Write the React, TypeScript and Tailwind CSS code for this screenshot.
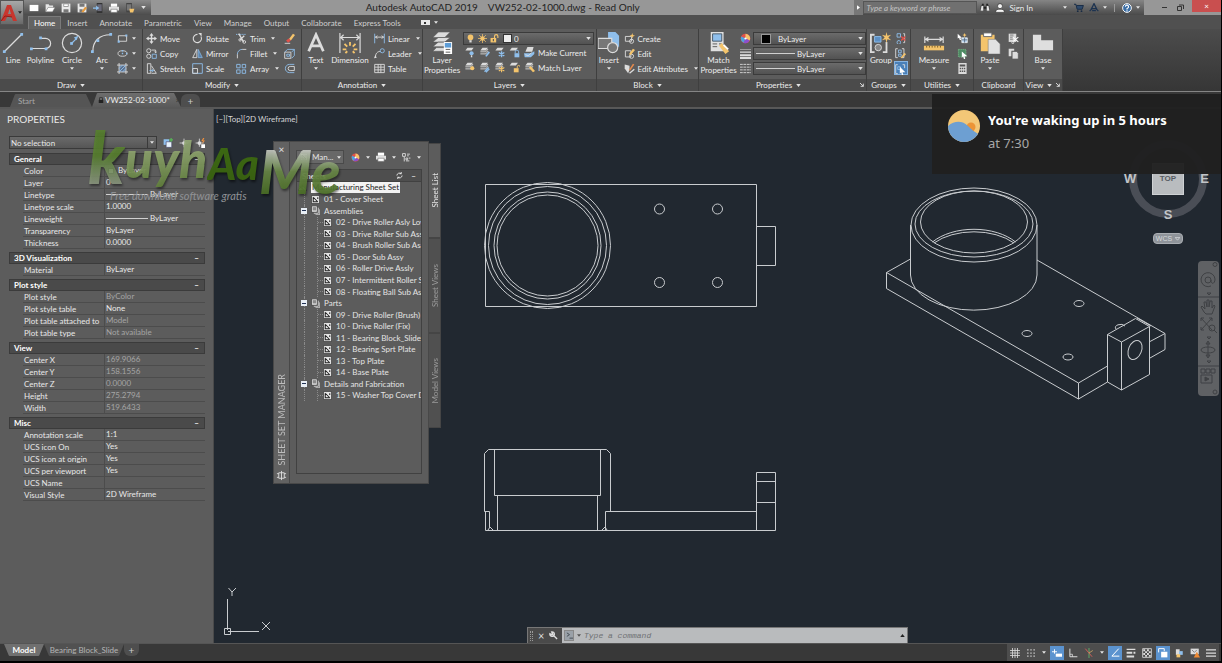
import type { ReactNode } from 'react'

const W = '#dcdcdc'
const B = '#8fbfec'
const Y = '#f4c46c'

const line = { fill: 'none', stroke: W, strokeWidth: 1.3 }
const blue = { fill: 'none', stroke: B, strokeWidth: 1.3 }

// stack of sheets shared by every layer icon
const sheets = (
  <>
    <path d="M5 1h8l-3 4H2z" fill={W} />
    <path d="M2 7h8l3-4M2 10h8l3-4" {...line} />
  </>
)

// drawn on a 16 x 16 grid
const small: Record<string, ReactNode> = {
  rect: <><path d="M2 4h12v8H2z" {...line} /><path d="M1 11h3v3H1zM12 2h3v3h-3z" fill={B} /></>,
  ellipse: <><ellipse cx="8" cy="8" rx="6.5" ry="4" {...line} /><path d="M7 7h2v2H7zM7 3h2v2H7zM13 7h2v2h-2z" fill={B} /></>,
  hatch: <><path d="M3 3h10v10H3z" fill="#5d7391" /><path d="M3 0v16M13 0v16M0 3h16M0 13h16" {...line} /><path d="M3 8l5-5M3 13L13 3M8 13l5-5" {...blue} /></>,
  move: <><path d="M8 2v12M2 8h12" {...line} strokeWidth={2} /><path d="M8 0l3 4H5zM8 16l3-4H5zM0 8l4-3v6zM16 8l-4-3v6z" fill={W} /></>,
  copy: <><circle cx="4" cy="4" r="3" {...line} /><circle cx="4" cy="12" r="3" {...line} /><path d="M9 9h6v6H9z" {...blue} /><path d="M8 3h6v4M12 5l2 2 2-2" {...line} /></>,
  stretch: <><path d="M2 1h5v14H2z" {...line} /><path d="M8 4l7 11H8" {...line} /><path d="M5 11h6M9 9l2 2-2 2" {...blue} /></>,
  rotate: <><path d="M13 5a6 6 0 1 1-5-3" {...line} strokeWidth={1.6} /><path d="M9 0h5v5z" fill={W} /></>,
  mirror: <><path d="M7 2v12H1z" {...line} /><path d="M9 2v12h6z" fill="#5a83ad" stroke={B} /></>,
  scale: <><path d="M1 1h14v14H1z" {...blue} /><path d="M1 8h7v7H1z" {...line} /></>,
  trim: <><path d="M0 2h15" {...blue} strokeDasharray="2 1" /><path d="M4 1l7 12M12 4L6 10" {...line} strokeWidth={2} /><circle cx="12" cy="13" r="2" {...line} /><circle cx="6" cy="10" r="1.8" {...line} /></>,
  fillet: <><path d="M2 15V9" {...line} /><path d="M2 9a7 7 0 0 1 7-7" {...blue} /><path d="M9 2h6" {...line} /></>,
  array: <path d="M1 2h5v5H1zM9 2h5v5H9zM1 10h5v5H1zM9 10h5v5H9z" {...blue} />,
  eraser: <><path d="M7 9l6-8 3 2-6 8z" fill={Y} /><path d="M3 11l4-3 3 3-4 3z" fill="#e0504a" /><path d="M1 15h8" {...line} /></>,
  explode: <><path d="M1 6h9v9H1z" {...line} /><path d="M1 6l4-4h10l-4 4M15 2v9l-4 4" {...blue} /><path d="M4 9h4v3H4z" {...blue} /></>,
  offset: <><path d="M15 2H8a6 6 0 0 0 0 12h7" {...blue} /><path d="M15 5H9a3 3 0 0 0 0 6h6z" {...line} /></>,
  linear: <><path d="M1 1v14M15 1v14" {...blue} /><path d="M2 6h12M5 4L2 6l3 2M11 4l3 2-3 2" {...line} /></>,
  leader: <><path d="M2 14c0-6 3-9 7-9" {...line} /><path d="M0 15l2-5 2 4z" fill={W} /><circle cx="12" cy="4" r="3" {...blue} /></>,
  table: <><path d="M1 2h14v12H1zM1 6h14M1 10h14M6 2v12M10 2v12" {...line} /></>,
  layoff: <><path d="M5 1h9l-3 4H2z" fill={W} /><circle cx="11" cy="9" r="3" fill={B} /><path d="M10 12h2v3h-2z" fill={W} /></>,
  layiso: <>{sheets}<path d="M9 13l5-7 2 2-5 6z" fill={B} /></>,
  layfreeze: <><path d="M5 1h9l-3 4H2z" fill={W} /><path d="M11 6v9M7 8l8 5M15 8l-8 5" {...blue} strokeWidth={2} /></>,
  laylock: <><path d="M4 1h9l-3 4H1z" fill={W} /><path d="M8 9h7v6H8z" fill={B} /><path d="M9 9V7a2 2 0 0 1 5 0v2" {...blue} /></>,
  laycur: <><path d="M5 0h9l-2 7H2z" fill={W} /><path d="M0 9h10l5-3v4l-5 5H1z" fill={B} /><path d="M2 11l4 2 5-5" {...line} /></>,
  layon: <>{sheets}<circle cx="12" cy="9" r="3" fill={Y} /></>,
  layuniso: <>{sheets}<path d="M8 14l6-6M10 15l5-5" {...blue} strokeWidth={2} /></>,
  laythaw: <>{sheets}<path d="M11 6v9M7 8l8 5M15 8l-8 5" {...line} stroke={Y} strokeWidth={1.6} /></>,
  layunlock: <><path d="M4 1h9l-3 4H1z" fill={W} /><path d="M7 9h7v6H7z" fill={Y} /><path d="M12 9V7a2 2 0 0 1 4 0" {...line} stroke={Y} /></>,
  laymatch: <>{sheets}<path d="M7 8l3-2 6 7-3 2z" fill={Y} /></>,
  create: <><path d="M2 5h9v7H2z" {...line} /><circle cx="11" cy="12" r="3" {...line} /><path d="M12 0l1 3 3 1-3 1-1 3-1-3-3-1 3-1z" fill={Y} /></>,
  edit: <><path d="M2 4h8v9H2z" {...line} /><circle cx="11" cy="12" r="3" {...line} /><path d="M7 9l6-8 3 2-6 7z" fill={Y} /></>,
  attr: <><path d="M1 2l7 2v6l-2 5-5-7z" fill={W} /><path d="M7 10l6-9 2 1-6 9z" fill="#e58a4c" /><path d="M8 15l7-6" {...line} strokeWidth={2} /></>,
  wheel: <><circle cx="8" cy="8" r="7" fill="#e0504a" /><path d="M8 8V1a7 7 0 0 1 6 10z" fill={Y} /><path d="M8 8l6 3a7 7 0 0 1-9 3z" fill="#8a4fd0" /><path d="M8 8L5 14A7 7 0 0 1 2 5z" fill="#4da3e0" /><circle cx="8" cy="8" r="1.6" fill="#fff" /></>,
  weight: <path d="M0 2h16v1H0zM0 5h16v2H0zM0 9h16v3H0zM0 13h16v3H0z" fill={W} />,
  ltype: <path d="M0 2h16M0 6h16M0 10h16M0 14h16" {...line} strokeDasharray="4 1" />,
  ungroup: <><path d="M3 1h5v5H3zM3 14a2.500 2.500 0 1 0 5 0 2.500 2.500 0 1 0-5-1z" {...blue} /><path d="M12 1h2v13h-2" {...line} /><path d="M9 5l6 6M15 5l-6 6" stroke="#e0504a" strokeWidth="2" /></>,
  groupedit: <><path d="M4 1H1v13h3M10 1h3v13h-3" {...line} /><path d="M5 3h4v4H5zM5 9h4v3H5z" {...blue} /><path d="M8 14l6-7 2 2-6 6z" fill={Y} /></>,
  groupsel: <><path d="M4 1H1v13h3M11 1h3v5" {...line} /><path d="M4 4h4v4H4z" {...blue} /><path d="M7 4l8 8h-4l1 4-2 0-1-4-2 2z" fill="#fff" /></>,
  quick: <><path d="M1 1l6 6H5l1 3-2 0-1-3-2 1z" fill="#fff" /><path d="M7 7h8v7H7z" fill="#b9d6f2" stroke="#fff" /><path d="M7 10h8M11 7v7" stroke="#456" /><path d="M11 0l1 2 2 1-2 1-1 2-1-2-2-1 2-1z" fill={Y} /></>,
  select: <><path d="M2 2h11v11H2z" fill="#4d8a63" stroke="#7ec48f" strokeDasharray="2 1" /><path d="M7 5l8 7h-4l1 4h-2l-1-4-2 2z" fill="#fff" /></>,
  calc: <><path d="M2 0h12v16H2z" fill={W} /><path d="M4 2h8v3H4zM4 7h2v2H4zM7 7h2v2H7zM10 7h2v2h-2zM4 11h2v2H4zM7 11h2v2H7zM10 11h2v2h-2z" fill="#555" /></>,
  cut: <><path d="M1 1h11v12H1z" fill={W} /><path d="M3 3h5M3 6h5M3 9h4" stroke="#555" /><path d="M7 6l8 7M15 6l-8 7" stroke="#fff" strokeWidth="1.500" /><circle cx="7" cy="14" r="1.500" {...line} /></>,
  clip: <><path d="M1 1h8v3H5v8H1z" fill={W} /><path d="M6 5h7l2 3v8H6z" fill={W} stroke="#555" /></>,
  bulb: <><circle cx="8" cy="6" r="5" fill={Y} /><path d="M6 11h4v4H6z" fill={W} /></>,
  sun: <><circle cx="8" cy="8" r="4" fill={Y} /><path d="M8 0v16M0 8h16M2 2l12 12M14 2L2 14" stroke={Y} strokeWidth="1.300" /></>,
  unlock: <><path d="M1 7h10v8H1z" fill={Y} /><path d="M8 7V4a3 3 0 0 1 6 0v3" fill="none" stroke={Y} strokeWidth="2" /><path d="M5 9h2v4H5z" fill="#555" /></>,
  new: <path d="M1 3h14v10H1z" fill="#fff" />,
  open: <><path d="M1 14V2h5l1 2h6v3H5z" fill="#e8e8e8" /><path d="M5 7h11l-4 7H1z" fill="#fff" stroke="#777" strokeWidth=".7" /></>,
  save: <><path d="M1 1h14v14H1z" fill="#e9e9e9" /><path d="M4 1h8v5H4zM4 10h8v5H4z" fill="#777" /><path d="M5 2h6v3H5z" fill="#fff" /></>,
  saveas: <><path d="M1 1h14v14H1z" fill="#e9e9e9" /><path d="M4 1h8v5H4zM4 10h5v5H4z" fill="#777" /><path d="M7 14l6-8 3 2-6 7z" fill="#e59a3c" /></>,
  mobile: <><path d="M6 0h9v16H6z" fill="#333" /><path d="M7 2h7v11H7z" fill="#6a6a78" /><path d="M0 7h5V4l5 4-5 4V9H0z" fill={B} /></>,
  print: <><path d="M3 1h10v5H3z" fill="#fff" /><path d="M0 6h16v6H0z" fill="#e0e0e0" /><path d="M3 10h10v5H3z" fill="#fff" stroke="#777" /></>,
  publish: <><path d="M2 0h9v15H2z" fill="#444" /><path d="M3 2h7v10H3z" fill="#777" /><path d="M7 9h8l-2 6H8z" fill={Y} /></>,
  sheet: <><path d="M1 1h14v14H1z" fill="#e9e9e9" stroke="#222" /><path d="M4 4l8 8M4 4v8h8M12 4v3" stroke="#222" strokeWidth="1.800" fill="none" /></>,
  subset: <><path d="M1 0h10v11H1z" fill="#e9e9e9" stroke="#222" /><path d="M3 2h6v6H3z" fill="#8a8a8a" /><path d="M13 3v10H5M15.500 6v9.500H8" stroke={W} fill="none" strokeWidth="1.400" /></>,
  set: <><path d="M0 13l8-8 8 8z" fill={W} stroke="#222" /><path d="M2 5l8 7M8 3v5" stroke="#222" strokeWidth="1.500" /></>,
  tree: <><path d="M1 1h5v5H1zM9 2h5M9 5h3M4 7v8M7 9h3v3H7zM12 9h3M7 14h6" {...line} strokeWidth={1.6} /></>,
  binoculars: <><path d="M2 4h4v9H0zM10 4h4l2 9h-6z" fill="#e4e4e4" stroke="#222" /><path d="M6 6h4v3H6zM3 1h3v3H3zM10 1h3v3h-3z" fill="#222" /></>,
  user: <><circle cx="8" cy="5" r="4" fill="#f4f4f4" stroke="#222" /><path d="M1 15c0-5 4-5 7-5s7 0 7 5z" fill="#f4f4f4" stroke="#222" /></>,
  cart: <><path d="M0 2h3l2 8h8l2-6H4" fill="#2f4a6b" stroke="#182b44" strokeWidth="1.500" /><circle cx="6" cy="13" r="1.500" fill="#182b44" /><circle cx="12" cy="13" r="1.500" fill="#182b44" /></>,
  a360: <><path d="M8 1l4 8H4z" fill="none" stroke="#1d3350" strokeWidth="2" /><path d="M1 13l4-4M15 13l-4-4M5 12h6" stroke="#1d3350" strokeWidth="2" /></>,
  help: <><circle cx="8" cy="8" r="7" fill="#3b6ea5" stroke="#fff" strokeWidth="1.500" /><path d="M5.500 6a2.500 2.500 0 1 1 3.500 2.200L8 9v1.500M8 11.500v2" stroke="#fff" strokeWidth="1.800" fill="none" /></>,
  grid: <path d="M4 0v16M8 0v16M12 0v16M0 4h16M0 8h16M0 12h16" {...line} />,
  snap: <path d="M3 2v13M8 2v13M13 2v13" {...line} strokeWidth={2} strokeDasharray="2 3" />,
  dyn: <><path d="M4 2v7M0 6h8" stroke="#fff" strokeWidth="1.500" /><path d="M6 9h10v5H6z" fill="#fff" /></>,
  ortho: <><path d="M3 1v13h12" {...line} strokeWidth={1.6} /><path d="M3 10h4v4" {...line} /></>,
  polar: <><path d="M8 0v16" stroke="#5fae6a" strokeWidth="1.500" /><path d="M2 1l11 13" stroke="#d2605a" strokeWidth="1.500" /><path d="M8 8l6-4" stroke={Y} /></>,
  track: <path d="M14 1L3 13h12" fill="none" stroke="#fff" strokeWidth="1.600" />,
  lwt: <path d="M1 1h14v2H1zM1 6h9v3H1zM1 12h12v3H1zM12 6h3v3h-3z" fill={W} />,
  transp: <><path d="M1 1h14v14H1z" {...line} /><path d="M2 2h3v3H2zM8 2h3v3H8zM5 5h3v3H5zM11 5h3v3h-3zM2 8h3v3H2zM8 8h3v3H8zM5 11h3v3H5zM11 11h3v3h-3z" fill={W} /></>,
  cycle: <><path d="M5 6h10v9H5z" fill="#fff" /><path d="M1 1h9v4M1 1v6" stroke="#fff" strokeWidth="1.500" fill="none" /></>,
  ucs: <><path d="M3 2h6v9H3z" fill={W} /><path d="M8 5h6v6H8z" fill={B} /><path d="M4 10h6v5H4z" fill={Y} /></>,
  warn: <><path d="M1 1h13v9H1z" fill={W} /><path d="M3 3l4 4 4-4" stroke="#555" fill="none" /><path d="M11 6l5 9H6z" fill="#ee8a35" /></>,
  menu: <path d="M0 3h16M0 8h16M0 13h16" {...line} strokeWidth={2} />,
  pick: <><path d="M1 2h9v9H1z" fill={B} /><path d="M5 6h9v9H5z" fill="#e8f2fb" stroke="#446" /><path d="M13 0v6M10 3h6" stroke="#57b457" strokeWidth="2" /></>,
  target: <><path d="M8 1v14M1 8h14" {...line} /><circle cx="8" cy="8" r="3" fill={W} /></>,
  quicksel: <><path d="M7 1v13M1 8h13" {...line} /><circle cx="7" cy="8" r="3" fill={W} /><path d="M13 0l-3 5h3l-2 5 5-6h-3l2-4z" fill="#f2913c" /><path d="M10 10h6v6h-6z" fill="#fff" /></>,
}

function Icon({ name, className = 'size-[11px]' }: { name: string; className?: string }) {
  return (
    <svg viewBox="0 0 16 16" className={`${className} shrink-0`} aria-hidden="true">
      {small[name]}
    </svg>
  )
}

function Caret({ className = 'w-1' }: { className?: string }) {
  return (
    <svg viewBox="0 0 6 4" className={`h-[3px] shrink-0 ${className}`} aria-hidden="true">
      <path d="M0 0h6L3 4z" fill="#e4e4e4" />
    </svg>
  )
}

// drawn on a 24 x 24 grid
const big: Record<string, ReactNode> = {
  Line: <><path d="M3 21L21 3" {...line} /><path d="M1 20h3v3H1zM20 1h3v3h-3z" fill={B} /></>,
  Polyline: <><path d="M2 18h15a5 5 0 0 0 0-11h-5" {...line} /><path d="M0 17h3v3H0zM10 5h3v3h-3zM16 17h3v3h-3z" fill={B} /></>,
  Circle: <><circle cx="12" cy="12" r="10.500" {...line} /><path d="M12 12l5-5" {...blue} /><path d="M10 11h3v3h-3z" fill={B} /><path d="M19 4l-5 2 3 3z" fill={B} /></>,
  Arc: <><path d="M2 21C2 10 9 3 21 3" {...line} /><path d="M0 20h3v3H0zM6 8h3v3H6zM20 1h3v3h-3z" fill={B} /></>,
  Text: <path d="M4 21L12 3l8 18M7 15h10" fill="none" stroke={W} strokeWidth="3" />,
  Dimension: <><path d="M1 1v22M23 1v22M2 6h20M5 3L2 6l3 3M19 3l3 3-3 3" {...line} /><path d="M12 11v4M6 13l3 3M18 13l-3 3M4 19h4M20 19h-4M9 21l-2 2M15 21l2 2" stroke={Y} strokeWidth="2" /></>,
  Layer: <><path d="M8 0h13l-6 6H2zM8 6h13l-6 5H2zM8 11h13l-6 5H2zM6 17h9v4H2z" fill={W} stroke="#555" strokeWidth=".6" /><path d="M14 11h9v13h-9z" fill="#fff" /><path d="M15 12h7v5h-7z" fill="#5c9cd6" /><path d="M16 19h5M16 22h5" stroke="#555" /></>,
  Insert: <><path d="M11 0h8l4 4v12H11z" fill={B} /><path d="M0 7h15v11H0z" fill="#777" stroke={W} strokeWidth="1.300" /><circle cx="16" cy="17" r="5.500" fill="#777" stroke={W} strokeWidth="1.300" /></>,
  Match: <><path d="M3 0h14v21H3z" fill="#e0e0e0" /><path d="M5 2h10v8H5z" fill={B} stroke="#456" /><path d="M5 13h5M5 16h5M12 13h3" stroke="#555" /><path d="M12 15l3-3 8 9-4 3z" fill={Y} /><path d="M17 14l5 5" stroke="#fff" strokeWidth="2" /></>,
  Group: <><path d="M5 3H1v19h4M14 22h4V11" fill="none" stroke={W} strokeWidth="2" /><path d="M5 5h7v6H5z" fill="#5c8fc4" stroke={B} /><circle cx="9" cy="17" r="3.500" fill="#888" stroke={W} /><path d="M18 0l1 4 4-1-3 3 3 3-4-1-1 4-1-4-4 1 3-3-3-3 4 1z" fill={Y} /></>,
  Measure: <><path d="M2 5v7M22 5v7M3 8h18M6 6L3 8l3 2M18 6l3 2-3 2" {...line} /><path d="M1 15h22v5H1z" fill={Y} /><path d="M4 15v2M7 15v2M10 15v2M13 15v2M16 15v2M19 15v2" stroke="#7a5a20" /></>,
  Paste: <><path d="M2 3h15v18H2z" fill={Y} /><path d="M5 1h9v4H5z" fill="#fff" stroke="#666" /><path d="M10 8h8l5 5v11H10z" fill="#e2e2e2" stroke="#777" strokeWidth=".6" /></>,
  Base: <path d="M1 3h9v6h13v11H1z" fill="#dedede" />,
}

function BigButton({ icon, label, className, caret }: { icon: string; label: string; className: string; caret?: boolean }) {
  return (
    <button className={`flex flex-col items-center pt-[3px] text-center ${className}`}>
      <svg viewBox="0 0 24 24" className="size-[22px] mb-px" aria-hidden="true">
        {big[icon]}
      </svg>
      <span className="leading-[10px]">{label}</span>
      {caret && <Caret className="w-1 mt-[2px]" />}
    </button>
  )
}

function Tool({ icon, label, caret }: { icon: string; label?: string; caret?: boolean }) {
  return (
    <button aria-label={label ?? icon} className="flex items-center gap-[3px] h-[15px] whitespace-nowrap">
      <Icon name={icon} />
      {label && <span>{label}</span>}
      {caret && <Caret className="w-1 ml-[3px]" />}
    </button>
  )
}

function Stack({ children, className = '' }: { children: ReactNode; className?: string }) {
  return <div className={`flex flex-col pt-[2px] ${className}`}>{children}</div>
}

function Panel({ title, children, className, arrow = true, launcher }: { title: string; children: ReactNode; className: string; arrow?: boolean; launcher?: boolean }) {
  return (
    <section className={`flex flex-col shrink-0 border-r border-[#3f3f3f] ${className}`}>
      <div className="flex h-[50px] bg-[#5c5c5c]">{children}</div>
      <button className={`relative flex items-center justify-center gap-1 h-3 bg-[#4b4b4b] ${launcher ? 'pr-2' : ''}`}>
        {title}
        {arrow && <Caret className="w-[5px]" />}
        {launcher && (
          <svg viewBox="0 0 6 6" className="absolute right-[2px] size-1" aria-hidden="true">
            <path d="M0 0l5 5M5 1v4H1" fill="none" stroke="#ddd" strokeWidth="1.400" />
          </svg>
        )}
      </button>
    </section>
  )
}

function PropSelect({ label, swatch }: { label: string; swatch?: boolean }) {
  return (
    <div className="relative flex items-center h-[13px] border border-[#3b3b3b] bg-linear-to-b from-[#6b6b6b] to-[#525252]">
      {swatch ? (
        <span className="absolute left-[7px] size-[10px] bg-black border border-[#999]" />
      ) : (
        <span className="absolute left-[2px] w-[39px] h-px bg-[#d0d0d0]" />
      )}
      <select aria-label={label} className={`w-full h-full appearance-none outline-none ${swatch ? 'pl-6' : 'pl-[43px]'}`}>
        <option>ByLayer</option>
      </select>
      <Caret className="absolute right-[2px] w-[5px]" />
    </div>
  )
}

function TitleBar() {
  return (
    <div className="flex h-[15px] bg-[#979797]">
      <div className="flex items-center gap-[6px] ml-6 px-[5px] bg-linear-to-b from-[#8a8a8a] to-[#4c4c4c]">
        {['new', 'open', 'save', 'saveas', 'mobile', 'print', 'publish'].map((name) => (
          <button key={name} aria-label={name}>
            <Icon name={name} className="size-[10px] block" />
          </button>
        ))}
        <Caret className="w-[5px]" />
      </div>
      <h1 className="flex-1 flex justify-center gap-[10px] text-[10px] leading-[15px] text-[#222]">
        <span>Autodesk AutoCAD 2019</span>
        <span>VW252-02-1000.dwg - Read Only</span>
      </h1>
      <div className="flex items-center bg-linear-to-b from-[#858585] to-[#4a4a4a]">
        <button aria-label="Expand search" className="flex items-center justify-center w-[9px] h-full bg-[#777]">
          <svg viewBox="0 0 4 6" className="w-[3px] h-[5px]" aria-hidden="true"><path d="M0 0l4 3-4 3z" fill="#fff" /></svg>
        </button>
        <input
          aria-label="Search"
          placeholder="Type a keyword or phrase"
          className="w-[114px] h-[13px] pl-[2px] bg-[#707070] border border-[#555] italic placeholder:text-[#c4c4c4] outline-none"
        />
        <Icon name="binoculars" className="size-[10px] ml-[3px]" />
        <button className="flex items-center gap-1 ml-[5px] text-[#eee]">
          <Icon name="user" className="size-[10px]" />
          Sign In
        </button>
        <Caret className="w-1 ml-[30px]" />
        <Icon name="cart" className="size-[10px] ml-[7px]" />
        <Icon name="a360" className="size-[10px] ml-[5px]" />
        <Caret className="w-1 ml-1" />
        <span className="w-px h-2 bg-[#999] mx-[7px]" />
        <Icon name="help" className="size-[10px]" />
        <Caret className="w-1 mx-1" />
      </div>
      <div className="flex text-[#222]">
        <button aria-label="Minimize" className="w-6 flex items-center justify-end pr-px">
          <span className="w-[5px] h-px bg-[#333]" />
        </button>
        <button aria-label="Restore" className="w-6 flex items-center justify-center">
          <svg viewBox="0 0 7 7" className="size-[7px]" aria-hidden="true">
            <path d="M.5 2.500h4v4h-4zM2 1h4.500v4" fill="none" stroke="#333" />
          </svg>
        </button>
        <button aria-label="Close" className="w-[29px] h-3 bg-[#c94f4f] text-white leading-[11px]">×</button>
      </div>
    </div>
  )
}

const ribbonTabs = ['Home', 'Insert', 'Annotate', 'Parametric', 'View', 'Manage', 'Output', 'Collaborate', 'Express Tools']

function Ribbon() {
  return (
    <>
      <nav className="flex items-end h-[14px] pl-7 bg-[#505050] text-[#cfcfcf]">
        {ribbonTabs.map((tab, i) => (
          <button
            key={tab}
            className={
              i === 0
                ? 'h-[13px] px-[5px] bg-[#636363] border border-b-0 border-[#7a7a7a] text-white'
                : 'h-[13px] px-[6px]'
            }
          >
            {tab}
          </button>
        ))}
        <button aria-label="Minimize ribbon" className="flex items-center h-[13px] gap-1 ml-[14px]">
          <span className="flex items-center justify-center w-[9px] h-[5px] bg-[#e8e8e8]">
            <span className="size-[2px] bg-[#333]" />
          </span>
          <Caret />
        </button>
      </nav>
      <div className="flex bg-linear-to-b from-[#4c4c4c] to-[#363636] border-b border-[#858585] text-[#ececec]">
        <Panel title="Draw" className="w-[143px]">
          <BigButton icon="Line" label="Line" className="w-[26px]" />
          <BigButton icon="Polyline" label="Polyline" className="w-[29px]" />
          <BigButton icon="Circle" label="Circle" className="w-[34px]" caret />
          <BigButton icon="Arc" label="Arc" className="w-[26px]" caret />
          <Stack className="ml-[2px]">
            {['rect', 'ellipse', 'hatch'].map((name) => (
              <button key={name} aria-label={name} className="flex items-center gap-1 h-[15px]">
                <Icon name={name} />
                <Caret />
              </button>
            ))}
          </Stack>
        </Panel>
        <Panel title="Modify" className="w-[159px]">
          <Stack className="w-[46px] pl-[3px]">
            <Tool icon="move" label="Move" />
            <Tool icon="copy" label="Copy" />
            <Tool icon="stretch" label="Stretch" />
          </Stack>
          <Stack className="w-11 pl-[3px]">
            <Tool icon="rotate" label="Rotate" />
            <Tool icon="mirror" label="Mirror" />
            <Tool icon="scale" label="Scale" />
          </Stack>
          <Stack className="w-12 pl-[3px]">
            <Tool icon="trim" label="Trim" caret />
            <Tool icon="fillet" label="Fillet" caret />
            <Tool icon="array" label="Array" caret />
          </Stack>
          <Stack className="pl-[3px]">
            <Tool icon="eraser" />
            <Tool icon="explode" />
            <Tool icon="offset" />
          </Stack>
        </Panel>
        <Panel title="Annotation" className="w-[121px]">
          <BigButton icon="Text" label="Text" className="w-7" caret />
          <BigButton icon="Dimension" label="Dimension" className="w-10" />
          <Stack className="pl-1">
            <Tool icon="linear" label="Linear" caret />
            <Tool icon="leader" label="Leader" caret />
            <Tool icon="table" label="Table" />
          </Stack>
        </Panel>
        <Panel title="Layers" className="w-[174px]">
          <BigButton icon="Layer" label="Layer Properties" className="w-[38px]" />
          <div className="flex-1 px-[2px] pt-[3px]">
            <div className="relative flex items-center h-[13px] border border-[#3b3b3b] bg-linear-to-b from-[#6b6b6b] to-[#525252]">
              <div className="absolute left-[2px] flex items-center gap-[3px] pointer-events-none">
                <Icon name="bulb" className="size-[9px]" />
                <Icon name="sun" className="size-[9px]" />
                <Icon name="unlock" className="size-[9px]" />
                <span className="ml-px size-[9px] bg-[#eee] border border-[#333]" />
              </div>
              <select aria-label="Layer" className="w-full h-full pl-[50px] appearance-none outline-none">
                <option>0</option>
              </select>
              <Caret className="absolute right-[2px] w-[5px]" />
            </div>
            <div className="flex items-center gap-1 h-[15px] pl-px">
              <Icon name="layoff" /><Icon name="layiso" /><Icon name="layfreeze" /><Icon name="laylock" />
              <Tool icon="laycur" label="Make Current" />
            </div>
            <div className="flex items-center gap-1 h-[15px] pl-px">
              <Icon name="layon" /><Icon name="layuniso" /><Icon name="laythaw" /><Icon name="layunlock" />
              <Tool icon="laymatch" label="Match Layer" />
            </div>
          </div>
        </Panel>
        <Panel title="Block" className="w-[102px]">
          <BigButton icon="Insert" label="Insert" className="w-6" caret />
          <Stack className="pl-[3px]">
            <Tool icon="create" label="Create" />
            <Tool icon="edit" label="Edit" />
            <Tool icon="attr" label="Edit Attributes" caret />
          </Stack>
        </Panel>
        <Panel title="Properties" className="w-[168px]" launcher>
          <BigButton icon="Match" label="Match Properties" className="w-[39px]" />
          <Stack className="px-[2px]">
            <div className="flex items-center h-[15px]"><Icon name="wheel" /></div>
            <div className="flex items-center h-[15px]"><Icon name="weight" /></div>
            <div className="flex items-center h-[15px]"><Icon name="ltype" /></div>
          </Stack>
          <div className="flex-1 flex flex-col gap-[2px] pt-[3px]">
            <PropSelect label="Object color" swatch />
            <PropSelect label="Lineweight" />
            <PropSelect label="Linetype" />
          </div>
        </Panel>
        <Panel title="Groups" className="w-11">
          <BigButton icon="Group" label="Group" className="w-7" />
          <Stack>
            <Tool icon="ungroup" />
            <Tool icon="groupedit" />
            <div className="-ml-px size-[14px] bg-[#4a80b8] border border-[#86b4e2]"><Tool icon="groupsel" /></div>
          </Stack>
        </Panel>
        <Panel title="Utilities" className="w-[63px]">
          <BigButton icon="Measure" label="Measure" className="w-[46px]" caret />
          <Stack>
            <Tool icon="quick" />
            <Tool icon="select" />
            <Tool icon="calc" />
          </Stack>
        </Panel>
        <Panel title="Clipboard" className="w-[50px]" arrow={false}>
          <BigButton icon="Paste" label="Paste" className="w-8" caret />
          <Stack className="pl-[2px]">
            <Tool icon="cut" />
            <Tool icon="clip" />
          </Stack>
        </Panel>
        <Panel title="View" className="w-[39px]" launcher>
          <BigButton icon="Base" label="Base" className="w-full" caret />
        </Panel>
      </div>
    </>
  )
}

function FileTabs() {
  return (
    <div className="flex items-end h-[17px] pl-[10px] bg-[#383838] border-b-2 border-[#585858]">
      <button className="w-[82px] h-[13px] pl-2 text-left text-[#a8a8a8] bg-[#555] rounded-t-md [clip-path:polygon(5px_0,76px_0,100%_100%,0_100%)]">Start</button>
      <div className="flex items-center w-[89px] h-[14px] pl-[6px] text-[#f0f0f0] bg-linear-to-b from-[#6e6e6e] to-[#5a5a5a] rounded-t-md [clip-path:polygon(5px_0,82px_0,100%_100%,0_100%)]">
        <svg viewBox="0 0 8 8" className="size-[6px] mr-px" aria-hidden="true">
          <path d="M1 4h6v4H1z" fill="#222" /><path d="M2 4V2a2 2 0 0 1 4 0v2" fill="none" stroke="#222" />
        </svg>
        <button>VW252-02-1000*</button>
        <button aria-label="Close tab" className="ml-[6px] text-[#2c2c2c]">×</button>
      </div>
      <button aria-label="New tab" className="w-[19px] h-[13px] leading-[12px] text-[10px] text-[#ccc] bg-[#4e4e4e] rounded-t-md">+</button>
    </div>
  )
}

type Row = [string, string, ('dim' | 'line' | 'swatch')?]

const sections: { title: string; rows: Row[] }[] = [
  {
    title: 'General',
    rows: [
      ['Color', 'ByLayer', 'swatch'],
      ['Layer', '0'],
      ['Linetype', 'ByLayer', 'line'],
      ['Linetype scale', '1.0000'],
      ['Lineweight', 'ByLayer', 'line'],
      ['Transparency', 'ByLayer'],
      ['Thickness', '0.0000'],
    ],
  },
  { title: '3D Visualization', rows: [['Material', 'ByLayer']] },
  {
    title: 'Plot style',
    rows: [
      ['Plot style', 'ByColor', 'dim'],
      ['Plot style table', 'None'],
      ['Plot table attached to', 'Model', 'dim'],
      ['Plot table type', 'Not available', 'dim'],
    ],
  },
  {
    title: 'View',
    rows: [
      ['Center X', '169.9066', 'dim'],
      ['Center Y', '158.1556', 'dim'],
      ['Center Z', '0.0000', 'dim'],
      ['Height', '275.2794', 'dim'],
      ['Width', '519.6433', 'dim'],
    ],
  },
  {
    title: 'Misc',
    rows: [
      ['Annotation scale', '1:1'],
      ['UCS icon On', 'Yes'],
      ['UCS icon at origin', 'Yes'],
      ['UCS per viewport', 'Yes'],
      ['UCS Name', ''],
      ['Visual Style', '2D Wireframe'],
    ],
  },
]

function PropertiesPalette() {
  return (
    <aside className="w-[214px] shrink-0 pl-[9px] pr-2 bg-[#5c5c5c] border-r border-[#4a4a4a] text-[#e8e8e8]">
      <h2 className="-ml-[2px] h-[27px] pt-[2px] text-[10px] leading-4">PROPERTIES</h2>
      <div className="flex items-center gap-[6px]">
        <div className="relative flex items-center w-[151px] h-[13px] border border-[#3a3a3a] bg-linear-to-b from-[#6a6a6a] to-[#565656]">
          <select aria-label="Selection" className="w-full h-full pl-px appearance-none outline-none">
            <option>No selection</option>
          </select>
          <span className="absolute right-0 flex items-center justify-center w-[9px] h-full border-l border-[#3a3a3a]"><Caret /></span>
        </div>
        <button aria-label="Toggle pickadd"><Icon name="pick" className="size-[10px]" /></button>
        <button aria-label="Select objects"><Icon name="target" className="size-[10px]" /></button>
        <button aria-label="Quick select"><Icon name="quicksel" className="size-[10px]" /></button>
      </div>
      <div className="flex flex-col gap-[3px] mt-1">
        {sections.map((section) => (
          <section key={section.title}>
            <h3 className="flex justify-between h-3 px-1 pr-[5px] leading-[10px] font-bold bg-[#4a4a4a] border border-[#3b3b3b] text-white">
              {section.title}
              <span>–</span>
            </h3>
            <table className="w-[182px] ml-[14px] table-fixed border-separate border-spacing-0">
              <tbody>
                {section.rows.map(([name, value, kind]) => (
                  <tr key={name} className="h-3">
                    <th scope="row" className="w-[82px] h-3 p-0 pt-px pl-px leading-[10px] text-left font-normal whitespace-nowrap border-b border-r border-[#4c4c4c]">{name}</th>
                    <td className={`h-3 p-0 whitespace-nowrap border-b border-[#4c4c4c] ${kind === 'dim' ? 'text-[#a5a5a5]' : ''}`}>
                      <span className="flex items-center h-[11px] pl-px leading-[11px]">
                        {kind === 'swatch' && <i className="size-[6px] ml-[2px] mr-1 bg-white border border-[#333]" />}
                        {kind === 'line' && <i className="w-[42px] h-px mr-[2px] bg-[#d0d0d0]" />}
                        {value}
                      </span>
                    </td>
                  </tr>
                ))}
              </tbody>
            </table>
          </section>
        ))}
      </div>
    </aside>
  )
}

type Node = { label: string; kind: 'set' | 'subset' | 'sheet'; depth: number }

const tree: Node[] = [
  { label: 'Manufacturing Sheet Set', kind: 'set', depth: 0 },
  { label: '01 - Cover Sheet', kind: 'sheet', depth: 1 },
  { label: 'Assemblies', kind: 'subset', depth: 1 },
  { label: '02 - Drive Roller Asly Low', kind: 'sheet', depth: 2 },
  { label: '03 - Drive Roller Sub Assy', kind: 'sheet', depth: 2 },
  { label: '04 - Brush Roller Sub Assy', kind: 'sheet', depth: 2 },
  { label: '05 - Door Sub Assy', kind: 'sheet', depth: 2 },
  { label: '06 - Roller Drive Assly', kind: 'sheet', depth: 2 },
  { label: '07 - Intermittent Roller Su', kind: 'sheet', depth: 2 },
  { label: '08 - Floating Ball Sub Ass', kind: 'sheet', depth: 2 },
  { label: 'Parts', kind: 'subset', depth: 1 },
  { label: '09 - Drive Roller (Brush)', kind: 'sheet', depth: 2 },
  { label: '10 - Drive Roller (Fix)', kind: 'sheet', depth: 2 },
  { label: '11 - Bearing Block_Slide', kind: 'sheet', depth: 2 },
  { label: '12 - Bearing Sprt Plate', kind: 'sheet', depth: 2 },
  { label: '13 - Top Plate', kind: 'sheet', depth: 2 },
  { label: '14 - Base Plate', kind: 'sheet', depth: 2 },
  { label: 'Details and Fabrication', kind: 'subset', depth: 1 },
  { label: '15 - Washer Top Cover D', kind: 'sheet', depth: 2 },
]

const indent = ['pl-px', 'pl-[14px]', 'pl-[26px]']

function SheetSetManager() {
  return (
    <div className="absolute left-[59px] top-8 flex items-start text-[#e4e4e4]">
      <div className="flex h-[343px] bg-[#5c5c5c] border border-[#484848]">
        <div className="flex flex-col items-center justify-between w-4 py-[2px] bg-[#626262] border-r border-[#484848]">
          <button aria-label="Close palette" className="text-[10px] leading-[10px]">×</button>
          <div className="flex flex-col items-center gap-1">
            <span className="[writing-mode:vertical-rl] rotate-180 text-[9px] leading-[14px] text-[#bdbdbd]">SHEET SET MANAGER</span>
            <svg viewBox="0 0 12 12" className="size-[11px]" aria-hidden="true">
              <path d="M3 3h6v6H3zM6 1v10M1 4h2M1 8h2M9 4h2M9 8h2" fill="none" stroke="#ddd" />
            </svg>
          </div>
        </div>
        <div className="w-[138px] px-[6px] pt-2">
          <div className="flex items-center gap-[6px] h-[14px]">
            <button className="flex items-center gap-1 w-12 h-[14px] px-[3px] border border-[#4a4a4a] bg-[#686868]">
              <Icon name="sheet" className="size-2" />
              <span className="flex-1 text-left">Man...</span>
              <Caret />
            </button>
            <Icon name="wheel" className="size-[9px] ml-px" />
            <Caret />
            <Icon name="print" className="size-[10px]" />
            <Caret />
            <Icon name="tree" className="size-[9px]" />
            <Caret />
          </div>
          <div className="flex items-center justify-between h-[13px] mt-[5px] px-[5px] font-bold bg-[#4e4e4e] border border-[#414141]">
            Sheets
            <span className="flex items-center gap-2">
              <svg viewBox="0 0 8 8" className="size-[7px]" aria-hidden="true">
                <path d="M1 4a3 3 0 0 1 5-2M7 4a3 3 0 0 1-5 2M6 0v2H4M2 8V6h2" fill="none" stroke="#eee" />
              </svg>
              <span>–</span>
            </span>
          </div>
          <div className="h-[292px] border border-t-0 border-[#414141] overflow-hidden">
            <ul className="relative flex flex-col h-[219px]">
              {tree.map((node) => (
                <li key={node.label} className={`relative flex-1 min-h-0 flex items-center gap-1 whitespace-nowrap ${indent[node.depth]}`}>
                  {node.depth > 0 && <span className="absolute left-[7px] h-full border-l border-dotted border-[#8a8a8a]" />}
                  {node.kind === 'subset' && (
                    <button aria-label="Collapse" className="absolute left-1 flex items-center size-[6px] bg-[#e8eef5]">
                      <span className="w-1 h-px mx-px bg-[#235]" />
                    </button>
                  )}
                  {node.depth === 2 && (
                    <span className="absolute left-5 flex items-center h-full w-[6px] border-l border-dotted border-[#8a8a8a]">
                      <span className="w-full border-t border-dotted border-[#8a8a8a]" />
                    </span>
                  )}
                  <Icon name={node.kind} className="size-[9px]" />
                  <span className={node.kind === 'set' ? 'px-px bg-[#f2f2f2] text-[#222] leading-[11px]' : ''}>{node.label}</span>
                </li>
              ))}
            </ul>
          </div>
        </div>
      </div>
      <div className="flex flex-col mt-[2px]">
        {['Sheet List', 'Sheet Views', 'Model Views'].map((tab, i) => (
          <button
            key={tab}
            className={`flex items-center justify-center w-3 h-[95px] border border-l-0 border-[#454545] ${i === 0 ? 'bg-[#5c5c5c] text-[#e4e4e4]' : 'bg-[#505050] text-[#9a9a9a]'}`}
          >
            <span className="[writing-mode:vertical-rl] rotate-180 leading-3">{tab}</span>
          </button>
        ))}
      </div>
    </div>
  )
}

function Drawing() {
  return (
    <svg viewBox="214 109 1007 534" preserveAspectRatio="xMinYMin" className="absolute inset-0 size-full" fill="none" stroke="#c9cccf" aria-hidden="true">
      {/* top view */}
      <path d="M485.500 184.500h271v122h-271zM756.500 226.500h19v39h-19" />
      <circle cx="547.500" cy="245.500" r="63" />
      <circle cx="547.500" cy="245.500" r="59" />
      <circle cx="547.500" cy="245.500" r="53.500" />
      <circle cx="547.500" cy="245.500" r="50.500" />
      {[209, 282.5].map((y) => [659.5, 717.5].map((x) => <circle key={`${x}-${y}`} cx={x} cy={y} r="5" />))}
      {/* front view */}
      <path d="M484.500 511.500v-58l4-4h118l4 4v58M484.500 511.500h5v16M494.500 449.500v46h106v-46M497.500 496v34M597.500 496v34M485.500 511.500v19h290v-58h-19v58M605.500 530v-18.500h151M756.500 481.500h19M756.500 502.500h19M488 530l2-3 3 3M602 530l3-3 2 3" />
      {/* isometric view */}
      <ellipse cx="974" cy="225" rx="63" ry="37" />
      <ellipse cx="974" cy="224" rx="59" ry="33" />
      <ellipse cx="974" cy="222" rx="53.500" ry="31" />
      <path d="M932.500 242a52 32 0 0 1 83 0M934 243a52 31 0 0 1 80 0" />
      <path d="M910.500 225v50a63 35 0 0 0 126.500 0v-50" />
      <path d="M910.500 259L886.500 272.500v16l192 110.500v-16l-192-110.500M1037 260l128 73.500v16l-15 8.500M1165 333.500l-15 8M1078.500 383l29-17M1078.500 399l29-17" />
      <path d="M1107.500 334.500l28-16 14 8v48l-28 15.500-14-8zM1107.500 334.500l14 7.500 28-15.500M1121.500 342v48M1137 318l14 8" />
      <ellipse cx="1135" cy="350" rx="6.500" ry="10" transform="rotate(22 1135 350)" />
      <ellipse cx="1079" cy="303.500" rx="5" ry="3" />
      <ellipse cx="1027" cy="333.500" rx="5" ry="3" />
      <ellipse cx="1068" cy="357" rx="5" ry="3" />
      <path d="M1116 329a5 3 0 1 1 9-3" />
      {/* UCS icon */}
      <path d="M227.500 599v31M228 631.500h31M224.500 628.500h6v6h-6zM228.500 588l3.500 4 4-4M232 592v4M262 622l8 8M270 622l-8 8" />
    </svg>
  )
}

function ViewCube() {
  return (
    <div className="absolute right-[13px] top-[30px] flex flex-col items-center w-20 font-['Liberation_Sans',sans-serif]">
      <div className="relative size-20 flex items-center justify-center">
        <div className="absolute inset-px rounded-full border-8 border-[#4a4e56]" />
        <button className="w-8 h-8 bg-[#b9bcbf] border border-[#cfd2d4] text-[8px] font-bold text-[#555b62]">TOP</button>
        <span className="absolute -left-1 text-[13px] font-bold text-[#c2c5c8]">W</span>
        <span className="absolute -right-px text-[13px] font-bold text-[#c2c5c8]">E</span>
        <span className="absolute -bottom-1 text-[13px] leading-4 font-bold text-[#c2c5c8]">S</span>
      </div>
      <button className="flex items-center justify-center gap-[3px] mt-[14px] w-[30px] h-[11px] rounded-sm bg-[#8f949a] border border-[#a9adb2] text-[7px] leading-[9px] text-[#d5d8db]">
        WCS
        <svg viewBox="0 0 6 5" className="w-[5px] h-1" aria-hidden="true"><path d="M0 .5h6L3 4z" fill="none" stroke="#d5d8db" /></svg>
      </button>
    </div>
  )
}

function NavBar() {
  return (
    <div className="absolute right-[2px] top-[152px] w-[21px] rounded-sm bg-[#5f6164]">
      <svg viewBox="0 0 21 135" className="w-full" fill="none" stroke="#3f4144" aria-hidden="true">
        <circle cx="17" cy="3.500" r="2" />
        <circle cx="10" cy="19" r="3" />
        <path d="M13 19c0 5 4 4 4-1a7 7 0 1 0-4 7M9 32h4l-2 2zM0 36h21" />
        <path d="M6 51l-3-5 1-1 3 3-1-7h2l1 5V39h2v7l1-6h2v7l2-3 1 1-3 8h-6z" />
        <path d="M3 57l11 12M14 57L3 69M3 60v-3h3M11 57h3v3M3 66v3h3" />
        <circle cx="14" cy="67" r="3" />
        <path d="M16 69l3 3M9 76h4l-2 2z" />
        <path d="M10 81v15M10 80l-2 3h4zM10 97l-2-3h4zM3 89c0-4 14-4 14 0s-14 4-14 0M9 100h4l-2 2zM0 105h21" />
        <path d="M3 108h4v4H3zM8 108h4v4H8zM13 108h4v4h-4zM3 114h11v8H3z" />
        <path d="M7 116l4 2-4 2z" fill="#3f4144" />
        <circle cx="17" cy="131" r="2" />
      </svg>
    </div>
  )
}

function CommandLine() {
  return (
    <div className="absolute left-[313px] bottom-0 flex w-[381px] h-4 bg-[#4a4a4a] border border-b-0 border-[#777]">
      <div className="flex items-center w-[34px] gap-[5px] pl-[2px] text-[#ddd]">
        <span className="w-[3px] h-[10px] border-x border-dotted border-[#999]" />
        <button aria-label="Close command line" className="text-[11px] leading-3">×</button>
        <svg viewBox="0 0 10 10" className="size-[9px]" aria-hidden="true">
          <path d="M4 4l5 5M1 3a2.500 2.500 0 1 0 2-2l1 2-1 1z" fill="none" stroke="#ddd" strokeWidth="1.500" />
        </svg>
      </div>
      <label className="flex-1 flex items-center bg-[#b9bbbd] font-['Liberation_Mono',monospace] italic">
        <span className="flex items-center justify-center w-[10px] h-[11px] ml-[2px] bg-[#9aa1a8] border border-[#888]">
          <svg viewBox="0 0 8 8" className="size-[7px]" aria-hidden="true"><path d="M1 1l3 2-3 2M4 7h4" fill="none" stroke="#3d464e" /></svg>
        </span>
        <svg viewBox="0 0 6 4" className="w-1 h-[3px] mx-[3px]" aria-hidden="true"><path d="M0 0h6L3 4z" fill="#555" /></svg>
        <input aria-label="Command" placeholder="Type a command" className="flex-1 h-full outline-none placeholder:text-[#6f7274]" />
        <svg viewBox="0 0 6 4" className="w-[5px] h-[3px] mr-[2px]" aria-hidden="true"><path d="M0 4h6L3 0z" fill="#222" /></svg>
      </label>
    </div>
  )
}

function Watermark() {
  return (
    <div className="absolute left-[88px] top-[118px] w-[280px] pointer-events-none select-none font-['Lato',sans-serif] italic">
      <div className="flex items-start h-[71px] whitespace-nowrap font-black drop-shadow-[1px_2px_1px_rgba(0,0,0,0.5)]">
        <span className="text-[72px] leading-[76px] text-transparent bg-linear-to-b from-[#55822a] via-[#5c8630] to-[#a2a29e] bg-clip-text opacity-85">k</span>
        <span className="text-[52px] leading-[80px] text-transparent bg-linear-to-b from-[#a3b48c] via-[#8aa268] to-[#53752a] bg-clip-text opacity-90">uyh</span>
        <span className="text-[44px] leading-[90px] text-transparent bg-linear-to-b from-[#3f6f14] to-[#35590f] bg-clip-text">Aa</span>
        <span className="text-[60px] leading-[107px] text-transparent bg-linear-to-b from-[#c8cbc4] from-30% via-[#6b8a48] to-[#3f6614] to-80% bg-clip-text opacity-90">Me</span>
      </div>
      <p className="pl-[22px] text-[11px] leading-[14px] text-[#8f9194]">Free download software gratis</p>
    </div>
  )
}

function Notification() {
  return (
    <div role="status" className="absolute -right-px top-[94px] flex gap-2 w-[290px] h-20 pl-4 pt-4 bg-[#202020]/97 font-['Noto_Sans',sans-serif]">
      <svg viewBox="0 0 32 32" className="size-8 shrink-0" aria-hidden="true">
        <defs><clipPath id="sun"><circle cx="16" cy="16" r="16" /></clipPath></defs>
        <g clipPath="url(#sun)">
          <path d="M0 0h32v32H0z" fill="#f3c777" />
          <circle cx="23" cy="17" r="4.500" fill="#ec9436" />
          <path d="M0 16c7-6 15-5 20 0 4 4 7 6 12 9v7H0z" fill="#6d9fd2" />
        </g>
      </svg>
      <div>
        <p className="text-[13px] leading-5 font-bold text-white">You're waking up in 5 hours</p>
        <p className="mt-[3px] text-[13px] leading-5 text-[#a8a8a8]">at 7:30</p>
      </div>
    </div>
  )
}

const status: { name: string; on?: boolean; caret?: boolean }[] = [
  { name: 'grid' },
  { name: 'snap', caret: true },
  { name: 'dyn', on: true },
  { name: 'ortho' },
  { name: 'polar', caret: true },
  { name: 'track', on: true },
  { name: 'lwt' },
  { name: 'transp' },
  { name: 'cycle', on: true },
  { name: 'ucs' },
  { name: 'warn' },
  { name: 'menu' },
]

function StatusBar() {
  return (
    <footer className="flex items-start justify-between h-5 bg-[#383838] border-t border-[#555] border-b-2 border-b-black">
      <div className="flex pl-1">
        <button className="w-10 h-3 font-bold text-white bg-[#707070] rounded-b-md [clip-path:polygon(0_0,100%_0,35px_100%,5px_100%)]">Model</button>
        <button className="w-20 h-3 text-[#b5b5b5] bg-[#515151] rounded-b-md [clip-path:polygon(0_0,100%_0,75px_100%,5px_100%)]">Bearing Block_Slide</button>
        <button aria-label="New layout" className="w-[15px] h-3 text-[10px] leading-3 text-[#ccc] bg-[#4e4e4e] rounded-b-md">+</button>
      </div>
      <div className="flex items-center h-[17px] mr-[2px] bg-[#4d4d4d]">
        {status.map((item) => (
          <div key={item.name} className="flex items-center">
            <button aria-label={item.name} className={`flex items-center justify-center mx-px size-[14px] ${item.on ? 'bg-[#5b93cf]' : ''}`}>
              <Icon name={item.name} className="size-[10px]" />
            </button>
            {item.caret && <Caret className="w-1 mx-[3px]" />}
          </div>
        ))}
      </div>
    </footer>
  )
}

export default function App() {
  return (
    <div className="relative flex flex-col min-h-screen border-r border-black bg-[#383838] text-[8px] leading-3 font-['Lato','Open_Sans',sans-serif] overflow-hidden">
      <header className="relative">
        <TitleBar />
        <Ribbon />
        <button aria-label="Application menu" className="absolute left-0 top-0 flex items-center gap-px w-6 h-[25px] bg-linear-to-b from-[#a8a8a8] to-[#6a6a6a] border border-[#555]">
          <svg viewBox="0 0 16 18" className="w-4 h-[18px]" aria-hidden="true">
            <path d="M0 17L6 1h4l6 16h-4l-1.500-4H6l-2 4zM7 10h3L8.500 5z" fill="#c8362e" fillRule="evenodd" />
            <path d="M0 17l4-5 7 1" fill="none" stroke="#8e1f1a" />
          </svg>
          <svg viewBox="0 0 6 4" className="w-1 h-[3px]" aria-hidden="true"><path d="M0 0h6L3 4z" fill="#222" /></svg>
        </button>
      </header>
      <FileTabs />
      <main className="flex-1 flex">
        <PropertiesPalette />
        <div className="relative flex-1 bg-[#212830]">
          <Drawing />
          <div className="relative pl-[2px] pt-1 text-[#d6d6d6]">[−][Top][2D Wireframe]</div>
          <SheetSetManager />
          <ViewCube />
          <NavBar />
          <CommandLine />
        </div>
      </main>
      <StatusBar />
      <Watermark />
      <Notification />
    </div>
  )
}
